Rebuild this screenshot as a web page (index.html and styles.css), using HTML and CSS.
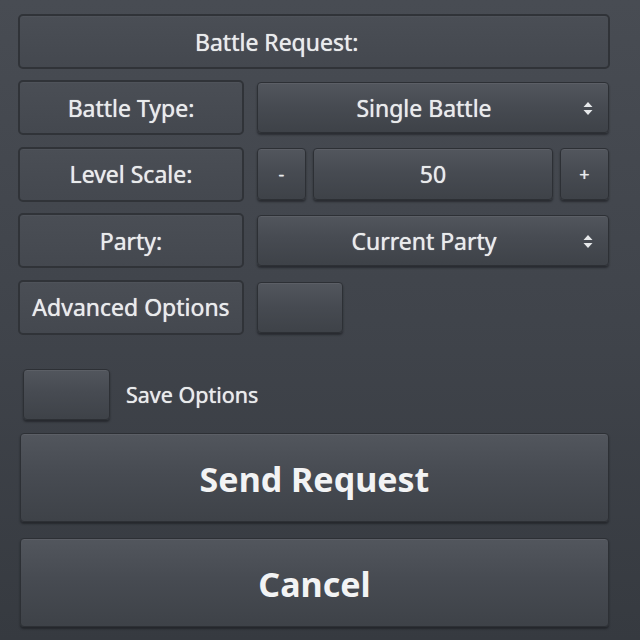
FILE: index.html
```html
<!DOCTYPE html>
<html>
<head>
<meta charset="utf-8">
<link rel="stylesheet" href="styles.css">
</head>
<body>
<div class="dialog">
  <div class="panel title">Battle Request:</div>
  <div class="grid">
    <div class="panel label">Battle Type:</div>
    <div class="btn select"><span class="sel-text">Single Battle</span><svg class="arrows" width="12" height="15" viewBox="0 0 12 15"><path d="M6 1 L10.5 6 H1.5 Z M6 14 L10.5 9 H1.5 Z" fill="#e6e8ea"/></svg></div>

    <div class="panel label">Level Scale:</div>
    <div class="spin">
      <div class="btn small">-</div>
      <div class="btn field">50</div>
      <div class="btn small">+</div>
    </div>

    <div class="panel label">Party:</div>
    <div class="btn select"><span class="sel-text">Current Party</span><svg class="arrows" width="12" height="15" viewBox="0 0 12 15"><path d="M6 1 L10.5 6 H1.5 Z M6 14 L10.5 9 H1.5 Z" fill="#e6e8ea"/></svg></div>

    <div class="panel label">Advanced Options</div>
    <div class="ctl-left"><div class="btn toggle"></div></div>
  </div>

  <div class="save-row">
    <div class="btn check"></div>
    <span class="save-text">Save Options</span>
  </div>

  <div class="btn big">Send Request</div>
  <div class="btn big cancel">Cancel</div>
</div>
</body>
</html>
```

FILE: styles.css
```css
html, body {
  margin: 0;
  padding: 0;
}
body {
  width: 640px;
  height: 640px;
  overflow: hidden;
  background: linear-gradient(180deg, #484c53 0%, #40444b 50%, #363a40 100%);
  font-family: "Noto Sans", "Open Sans", sans-serif;
  color: #e9ebec;
}
.dialog {
  padding: 14px 30px 0 18px;
  display: flex;
  flex-direction: column;
}
.panel {
  box-sizing: border-box;
  border: 2px solid #303338;
  border-radius: 5px;
  background: linear-gradient(180deg, #4a4e55 0%, #44484f 100%);
  box-shadow: inset 0 1px 0 rgba(255,255,255,0.03);
  display: flex;
  align-items: center;
  font-size: 23px;
  text-shadow: 0 0 0.8px #e9ebec;
}
.title {
  height: 55px;
  padding-left: 175px;
}
.grid {
  margin-top: 11px;
  display: grid;
  grid-template-columns: 226px 352px;
  grid-auto-rows: 55px;
  column-gap: 13px;
  row-gap: 11.5px;
}
.label {
  justify-content: center;
}
.btn {
  box-sizing: border-box;
  border: 1px solid #2d3035;
  border-radius: 4px;
  background: linear-gradient(180deg, #52565d 0%, #474b52 45%, #3e4248 100%);
  box-shadow: inset 0 1px 0 rgba(255,255,255,0.06), 0 2px 2px rgba(20,22,26,0.55);
  display: flex;
  align-items: center;
  justify-content: center;
  font-size: 23px;
  text-shadow: 0 0 0.8px #e9ebec;
}
.select {
  align-self: center;
  height: 51px;
  position: relative;
  padding-right: 18px;
}
.arrows {
  position: absolute;
  right: 14px;
  top: 18px;
}
.spin {
  align-self: center;
  height: 52px;
  display: flex;
  gap: 7px;
}
.small {
  width: 49px;
  height: 52px;
  font-size: 18px;
}
.field {
  flex: 1;
  height: 52px;
}
.ctl-left {
  display: flex;
  align-items: center;
}
.toggle {
  width: 86px;
  height: 51px;
}
.save-row {
  margin-top: 34px;
  margin-left: 5px;
  display: flex;
  align-items: center;
  height: 51px;
}
.check {
  width: 87px;
  height: 51px;
}
.save-text {
  margin-left: 16px;
  font-size: 21.5px;
  text-shadow: 0 0 0.8px #e9ebec;
}
.big {
  margin-left: 2px;
  margin-right: 1px;
  margin-top: 13px;
  height: 89px;
  padding-top: 3px;
  font-size: 34px;
  font-weight: 700;
  color: #f2f3f4;
  text-shadow: none;
}
.cancel {
  margin-top: 16px;
}
```
